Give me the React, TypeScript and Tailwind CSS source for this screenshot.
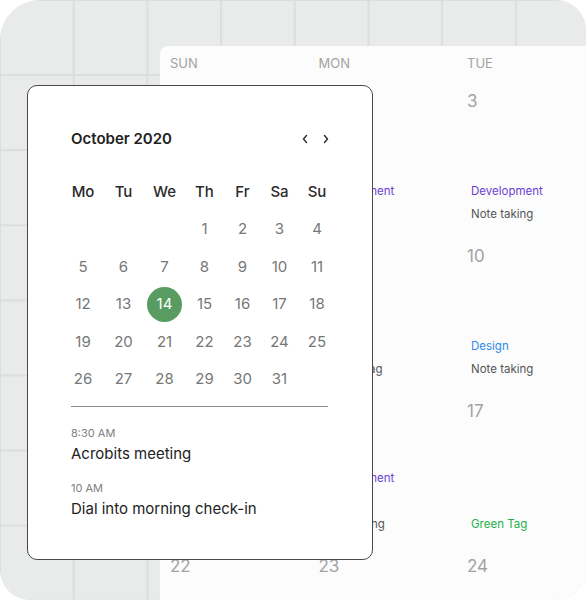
import React from "react";

const weekdays = ["Mo", "Tu", "We", "Th", "Fr", "Sa", "Su"];

// October 2020 starts on a Thursday
const days: (number | null)[] = [
  null, null, null, 1, 2, 3, 4,
  5, 6, 7, 8, 9, 10, 11,
  12, 13, 14, 15, 16, 17, 18,
  19, 20, 21, 22, 23, 24, 25,
  26, 27, 28, 29, 30, 31, null,
];

const events = [
  { time: "8:30 AM", title: "Acrobits meeting" },
  { time: "10 AM", title: "Dial into morning check-in" },
];

function Chevron({ dir }: { dir: "left" | "right" }) {
  return (
    <svg viewBox="0 0 8 12" className="h-3 w-2" fill="none" stroke="#333" strokeWidth="1.5" strokeLinecap="round" strokeLinejoin="round">
      {dir === "left" ? <polyline points="5.5,2.5 2.5,6 5.5,9.5" /> : <polyline points="2.5,2.5 5.5,6 2.5,9.5" />}
    </svg>
  );
}

function Cell({ date, children }: { date: number; children?: React.ReactNode }) {
  return (
    <div className="h-[155px] pl-[10px] pt-[11px]">
      <div className="text-[17px] leading-5 text-[#a3a3a3]">{date}</div>
      {children}
    </div>
  );
}

function Tag({ color, className, children }: { color: string; className: string; children: React.ReactNode }) {
  return <div className={`pl-1 text-[11.5px] leading-4 whitespace-nowrap ${color} ${className}`}>{children}</div>;
}

const purple = "text-[#6b3fd4]";
const blue = "text-[#2e8ae6]";
const green = "text-[#24b34a]";
const gray = "text-[#555]";

function WeekPanel() {
  return (
    <div className="h-[600px] overflow-hidden rounded-tl-[8px] bg-[#fcfcfc]">
      <div className="grid h-[34px] grid-cols-[148.5px_148.5px_148.5px] pt-[9px] text-[13px] leading-4 text-[#a3a3a3]">
        <div className="pl-[10px]">SUN</div>
        <div className="pl-[10px]">MON</div>
        <div className="pl-[10px]">TUE</div>
      </div>
      <div className="grid grid-cols-[148.5px_148.5px_148.5px]">
        <Cell date={1} />
        <Cell date={2}>
          <Tag color={purple} className="mt-[72px]">Development</Tag>
        </Cell>
        <Cell date={3}>
          <Tag color={purple} className="mt-[72px]">Development</Tag>
          <Tag color={gray} className="mt-[7px]">Note taking</Tag>
        </Cell>

        <Cell date={8} />
        <Cell date={9}>
          <Tag color={blue} className="mt-[72px]">Design</Tag>
          <Tag color={gray} className="mt-[7px]">Update tag</Tag>
        </Cell>
        <Cell date={10}>
          <Tag color={blue} className="mt-[72px]">Design</Tag>
          <Tag color={gray} className="mt-[7px]">Note taking</Tag>
        </Cell>

        <Cell date={15} />
        <Cell date={16}>
          <Tag color={purple} className="mt-[49px]">Development</Tag>
          <Tag color={gray} className="mt-[30px]">Note taking</Tag>
        </Cell>
        <Cell date={17}>
          <Tag color={green} className="mt-[95px]">Green Tag</Tag>
        </Cell>

        <Cell date={22} />
        <Cell date={23} />
        <Cell date={24} />
      </div>
    </div>
  );
}

function DatePicker() {
  return (
    <div className="absolute left-[27px] top-[85px] h-[475px] w-[346px] rounded-[10px] border border-[#4a4a4a] bg-white pl-[43px] pt-[43px]">
      <div className="flex w-[259px] items-center justify-between">
        <div className="text-[15px] font-semibold leading-5 text-[#222]">October 2020</div>
        <div className="flex items-center gap-[13px]">
          <Chevron dir="left" />
          <Chevron dir="right" />
        </div>
      </div>

      <div className="-ml-2 mt-[24px] grid grid-cols-[40px_41px_41px_39px_37px_37px_38px] auto-rows-[37.5px] text-[15px]">
        {weekdays.map((d) => (
          <div key={d} className="flex items-center justify-center font-medium text-[#2a2a2a]">
            {d}
          </div>
        ))}
        {days.map((d, i) => (
          <div key={i} className="flex items-center justify-center">
            {d === 14 ? (
              <span className="flex h-[35px] w-[35px] items-center justify-center rounded-full bg-[#589c62] text-white">
                {d}
              </span>
            ) : (
              <span className="text-[#777]">{d}</span>
            )}
          </div>
        ))}
      </div>

      <div className="mt-[8px] h-px w-[257px] bg-[#8a8a8a]" />

      <div className="flex flex-col">
        {events.map((e, i) => (
          <div key={e.title} className={i === 0 ? "mt-[19px]" : "mt-[17px]"}>
            <div className="text-[11px] leading-[14px] text-[#808080]">{e.time}</div>
            <div className="mt-1 text-[15px] leading-5 text-[#222]">{e.title}</div>
          </div>
        ))}
      </div>
    </div>
  );
}

export default function App() {
  return (
    <div className="bg-white font-['Inter',sans-serif]">
      <div className="relative h-[600px] w-[586px] overflow-hidden rounded-[30px] rounded-tl-[40px] bg-[#e9eaea] bg-[linear-gradient(to_right,#dcdede_2px,transparent_2px),linear-gradient(to_bottom,#dcdede_2px,transparent_2px)] bg-[size:73.7px_75.1px] bg-[position:-1px_-1px] pl-[160px] pt-[46px]">
        <WeekPanel />
        <DatePicker />
      </div>
    </div>
  );
}
